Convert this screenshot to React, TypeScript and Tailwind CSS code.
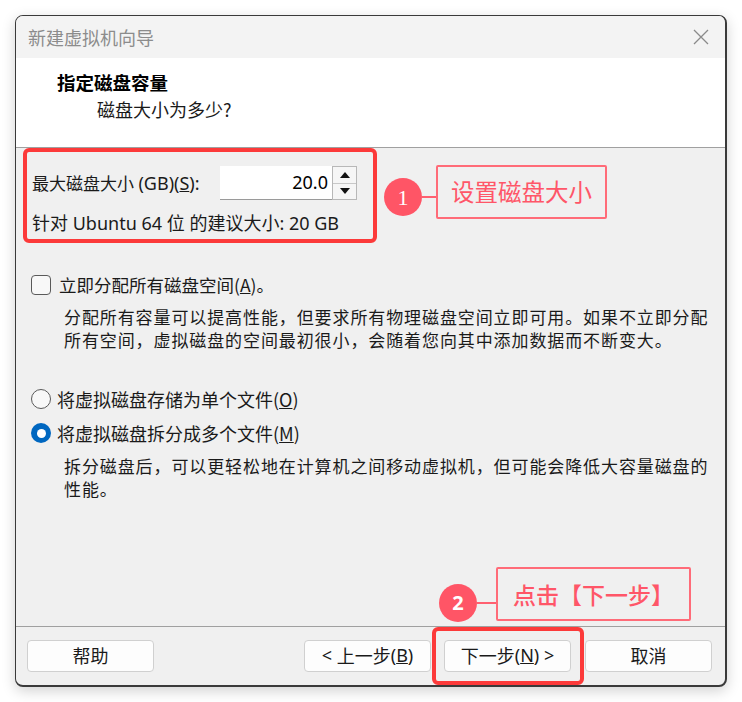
import React from "react";

const FONT = { fontFamily: '"Noto Sans", "Noto Sans CJK SC", sans-serif' };
const CJK = { fontFamily: '"Noto Sans CJK SC", "Noto Sans", sans-serif' };

function Btn({ children }: { children: React.ReactNode }) {
  return (
    <div className="w-[127px] h-[32px] flex items-center justify-center rounded-[4px] border border-[#d0d0d0] bg-[#fdfdfd] text-[18px] text-[#1a1a1a] whitespace-pre">
      {children}
    </div>
  );
}

export default function App() {
  return (
    <div className="relative w-[742px] h-[702px] bg-white pt-[15px] pl-[15px]" style={FONT}>
      <div className="w-[712px] h-[672px] flex flex-col rounded-[8px] border border-[#3a3a3a] border-r-2 border-b-2 overflow-hidden bg-[#f0f0f0] shadow-[0_4px_14px_rgba(0,0,0,0.18)]">
        {/* Title bar */}
        <div className="h-[42px] bg-[#f3f3f3] flex items-center justify-between pl-[12px] pr-[16px]">
          <span className="text-[18px] text-[#8c8c8c] leading-none" style={CJK}>新建虚拟机向导</span>
          <svg width="16" height="16" viewBox="0 0 16 16">
            <path d="M1 1 L15 15 M15 1 L1 15" stroke="#8a8a8a" strokeWidth="1.3" fill="none" />
          </svg>
        </div>
        {/* Header */}
        <div className="h-[90px] bg-white border-b border-[#a0a0a0] pl-[41px] pt-[12px]">
          <div className="text-[18.5px] font-bold text-black leading-[24px]" style={CJK}>指定磁盘容量</div>
          <div className="text-[18px] text-[#1a1a1a] leading-[24px] pl-[40px] mt-[3px]" style={CJK}>磁盘大小为多少?</div>
        </div>
        {/* Content */}
        <div className="flex-1 pl-[16px] pt-[18px] text-[17px] text-[#1a1a1a]">
          <div className="flex items-center h-[34px]">
            <span className="w-[188px] whitespace-pre">
              <span style={CJK}>最大磁盘大小</span>{" "}<span className="text-[18px]">(GB)(<u>S</u>):</span>
            </span>
            <div className="h-[34px] w-[112px] bg-white border-b border-[#9a9a9a] flex items-center justify-end pr-[4px] text-[18px] text-black">20.0</div>
            <div className="h-[34px] w-[25px] flex flex-col border border-[#b8b8b8] bg-[#f6f6f6]">
              <div className="flex-1 flex items-center justify-center border-b border-[#c8c8c8]">
                <svg width="10" height="6" viewBox="0 0 10 6"><path d="M5 0 L10 6 L0 6 Z" fill="#111" /></svg>
              </div>
              <div className="flex-1 flex items-center justify-center">
                <svg width="10" height="6" viewBox="0 0 10 6"><path d="M0 0 L10 0 L5 6 Z" fill="#111" /></svg>
              </div>
            </div>
          </div>
          <div className="mt-[11px] h-[24px] leading-[24px] whitespace-nowrap text-[18px]">针对 Ubuntu 64 位 的建议大小: 20 GB</div>

          <div className="mt-[38px] h-[24px] flex items-center">
            <div className="w-[20px] h-[20px] rounded-[4px] border border-[#5a5a5a] bg-[#f8f8f8] ml-[-1px]" />
            <span className="ml-[8px] leading-[24px] text-[17.5px]" style={CJK}>立即分配所有磁盘空间(<u>A</u>)。</span>
          </div>
          <div className="mt-[8px] pl-[32px] text-[17px] leading-[23px] tracking-[0.9px] whitespace-nowrap" style={CJK}>
            <div>分配所有容量可以提高性能，但要求所有物理磁盘空间立即可用。如果不立即分配</div>
            <div>所有空间，虚拟磁盘的空间最初很小，会随着您向其中添加数据而不断变大。</div>
          </div>

          <div className="mt-[36px] h-[24px] flex items-center">
            <div className="w-[20px] h-[20px] rounded-full border border-[#5a5a5a] bg-[#f8f8f8] ml-[-1px]" />
            <span className="ml-[6px] leading-[24px] text-[18px]" style={CJK}>将虚拟磁盘存储为单个文件(<u>O</u>)</span>
          </div>
          <div className="mt-[10px] h-[24px] flex items-center">
            <div className="w-[20px] h-[20px] rounded-full bg-[#0067c0] flex items-center justify-center ml-[-1px]">
              <div className="w-[9px] h-[9px] rounded-full bg-white" />
            </div>
            <span className="ml-[6px] leading-[24px] text-[18px]" style={CJK}>将虚拟磁盘拆分成多个文件(<u>M</u>)</span>
          </div>
          <div className="mt-[9px] pl-[32px] text-[17px] leading-[23px] tracking-[0.9px] whitespace-nowrap" style={CJK}>
            <div>拆分磁盘后，可以更轻松地在计算机之间移动虚拟机，但可能会降低大容量磁盘的</div>
            <div>性能。</div>
          </div>
        </div>
        {/* Footer */}
        <div className="h-[59px] border-t border-[#a0a0a0] flex items-center pl-[11px] pr-[13px] pb-[1px]">
          <Btn><span style={CJK}>帮助</span></Btn>
          <div className="flex-1" />
          <Btn>{"< "}<span style={CJK}>上一步</span>(<u>B</u>)</Btn>
          <div className="w-[13px]" />
          <Btn><span style={CJK}>下一步</span>(<u>N</u>){" >"}</Btn>
          <div className="w-[14px]" />
          <Btn><span style={CJK}>取消</span></Btn>
        </div>
      </div>

      {/* Annotation 1 */}
      <div className="absolute left-[23px] top-[148px] w-[354px] h-[95px] border-[4px] border-[#fc3a3a] rounded-[6px]" />
      <div className="absolute left-[384px] top-[178px] w-[38px] h-[38px] rounded-full bg-[#ff5566] flex items-center justify-center text-white text-[22px]" style={{ fontFamily: '"Liberation Serif", serif' }}>1</div>
      <div className="absolute left-[422px] top-[196px] w-[14px] h-[2px] bg-[#ff6070]" />
      <div className="absolute left-[436px] top-[165px] w-[171px] h-[54px] border-2 border-[#ff6b78] rounded-[2px] flex items-center justify-center text-[23.5px] text-[#ff5668]" style={CJK}>设置磁盘大小</div>

      {/* Annotation 2 */}
      <div className="absolute left-[432px] top-[627px] w-[152px] h-[58px] border-[4px] border-[#fc3a3a] rounded-[6px]" />
      <div className="absolute left-[439px] top-[584px] w-[38px] h-[38px] rounded-full bg-[#ff5566] flex items-center justify-center text-white text-[20px] font-bold" style={FONT}>2</div>
      <div className="absolute left-[477px] top-[602px] w-[19px] h-[2px] bg-[#ff6070]" />
      <div className="absolute left-[496px] top-[567px] w-[195px] h-[54px] border-2 border-[#ff6b78] rounded-[2px] flex items-center justify-center text-[23px] font-medium text-[#ff5668]" style={CJK}>点击【下一步】</div>
    </div>
  );
}
